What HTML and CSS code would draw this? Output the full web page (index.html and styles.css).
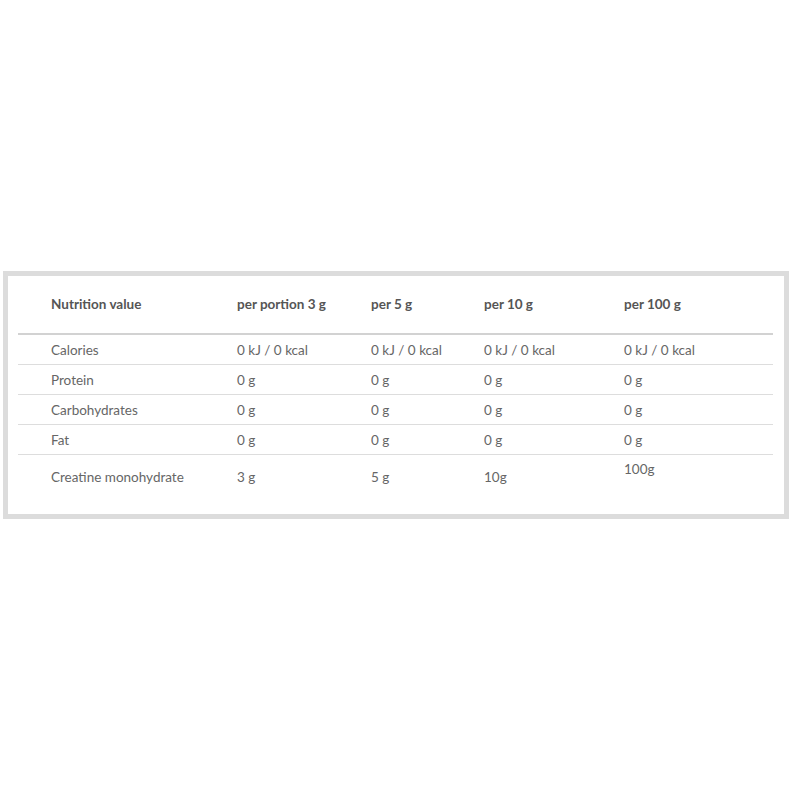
FILE: index.html
```html
<!DOCTYPE html>
<html>
<head>
<meta charset="utf-8">
<link rel="stylesheet" href="styles.css">
</head>
<body>
<div class="page">
  <div class="box">
    <div class="table">
      <div class="row head">
        <div class="cell first">Nutrition value</div>
        <div class="cell">per portion 3 g</div>
        <div class="cell">per 5 g</div>
        <div class="cell">per 10 g</div>
        <div class="cell">per 100 g</div>
      </div>
      <div class="row">
        <div class="cell first">Calories</div>
        <div class="cell">0 kJ / 0 kcal</div>
        <div class="cell">0 kJ / 0 kcal</div>
        <div class="cell">0 kJ / 0 kcal</div>
        <div class="cell">0 kJ / 0 kcal</div>
      </div>
      <div class="row">
        <div class="cell first">Protein</div>
        <div class="cell">0 g</div>
        <div class="cell">0 g</div>
        <div class="cell">0 g</div>
        <div class="cell">0 g</div>
      </div>
      <div class="row">
        <div class="cell first">Carbohydrates</div>
        <div class="cell">0 g</div>
        <div class="cell">0 g</div>
        <div class="cell">0 g</div>
        <div class="cell">0 g</div>
      </div>
      <div class="row">
        <div class="cell first">Fat</div>
        <div class="cell">0 g</div>
        <div class="cell">0 g</div>
        <div class="cell">0 g</div>
        <div class="cell">0 g</div>
      </div>
      <div class="row last">
        <div class="cell first">Creatine monohydrate</div>
        <div class="cell">3 g</div>
        <div class="cell">5 g</div>
        <div class="cell">10g</div>
        <div class="cell raised">100g</div>
      </div>
    </div>
  </div>
</div>
</body>
</html>
```
FILE: styles.css
```css
html, body {
  margin: 0;
  padding: 0;
  background: #ffffff;
}
body {
  font-family: Lato, "Open Sans", "Liberation Sans", sans-serif;
  font-size: 13.5px;
  color: #666666;
}
.page {
  width: 793px;
  height: 793px;
  padding-top: 271px;
  padding-left: 3px;
  box-sizing: border-box;
}
.box {
  width: 786px;
  height: 248px;
  box-sizing: border-box;
  border: 5px solid #dcdcdc;
  background: #fff;
  padding: 0 11px 0 10px;
}
.table {
  display: flex;
  flex-direction: column;
}
.row {
  display: grid;
  grid-template-columns: 219px 134px 113px 140px 149px;
  height: 30px;
  box-sizing: border-box;
  align-items: center;
  border-bottom: 1px solid #dddddd;
}
.row.head {
  height: 59px;
  border-bottom: 2px solid #d2d2d2;
  font-weight: 700;
  color: #555555;
  align-items: start;
  padding-top: 20px;
}
.row.last {
  border-bottom: none;
  height: 58px;
  align-items: start;
  padding-top: 14px;
}
.cell {
  line-height: 16px;
  white-space: nowrap;
}
.cell.first {
  padding-left: 33px;
}
.cell.raised {
  margin-top: -8px;
}
```
